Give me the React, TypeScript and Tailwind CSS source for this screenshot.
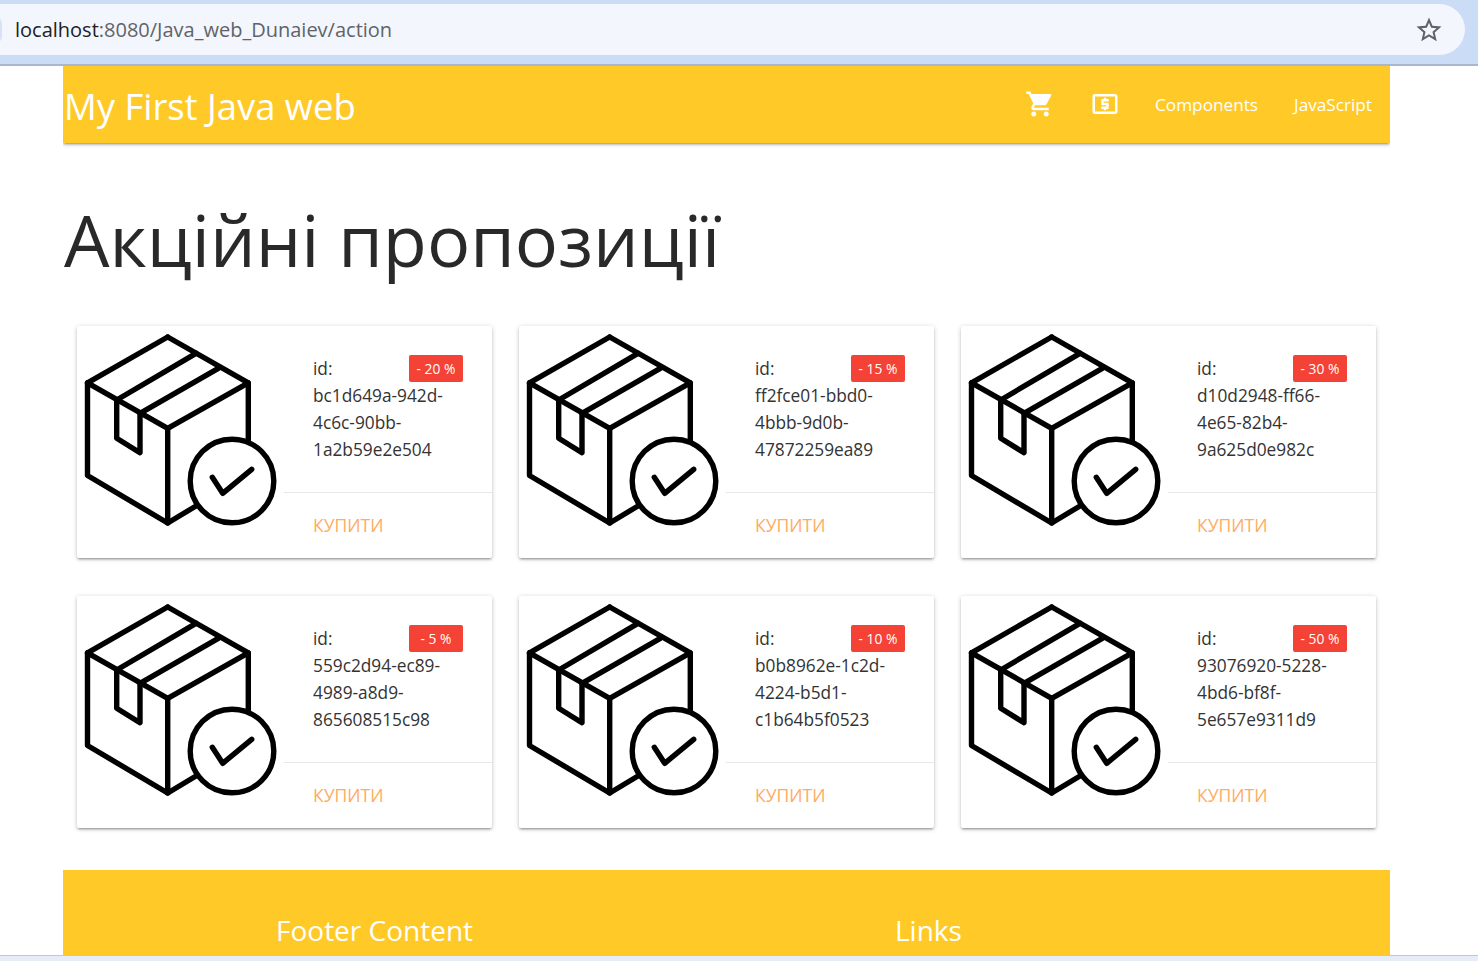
import { MdShoppingCart, MdLocalAtm, MdStarBorder } from 'react-icons/md';

const offers = [
  { discount: '- 20 %', lines: ['bc1d649a-942d-', '4c6c-90bb-', '1a2b59e2e504'] },
  { discount: '- 15 %', lines: ['ff2fce01-bbd0-', '4bbb-9d0b-', '47872259ea89'] },
  { discount: '- 30 %', lines: ['d10d2948-ff66-', '4e65-82b4-', '9a625d0e982c'] },
  { discount: '- 5 %', lines: ['559c2d94-ec89-', '4989-a8d9-', '865608515c98'] },
  { discount: '- 10 %', lines: ['b0b8962e-1c2d-', '4224-b5d1-', 'c1b64b5f0523'] },
  { discount: '- 50 %', lines: ['93076920-5228-', '4bd6-bf8f-', '5e657e9311d9'] },
];

const BoxIcon = () => (
  <svg width="207" height="232" viewBox="0 0 207 232" fill="none" stroke="#000" strokeWidth="5.4" strokeLinejoin="round" strokeLinecap="round" className="shrink-0">
    <path d="M90.7 11 L10.5 56.8 L10.5 149.5 L90.7 197 L119 180" />
    <path d="M90.7 11 L171.3 56.8 L171.3 114" />
    <path d="M10.5 56.8 L90.7 102.3 L171.3 56.8" />
    <path d="M90.7 102.3 L90.7 197" />
    <path d="M39.7 74 L119 27.3" />
    <path d="M63 87.3 L141.3 42.3" />
    <path d="M39.7 74 L39.7 112.3 L63 126.7 L63 87.3" />
    <circle cx="155" cy="155" r="41.8" />
    <path d="M135.3 151.3 L145.7 167.3 L174.7 143.3" />
  </svg>
);

const OfferCard = ({ discount, lines }: { discount: string; lines: string[] }) => (
  <div className="flex h-[232px] w-[415px] rounded-[2px] bg-white shadow-[0_2px_2px_0_rgba(0,0,0,0.14),0_3px_1px_-2px_rgba(0,0,0,0.12),0_1px_5px_0_rgba(0,0,0,0.2)]">
    <BoxIcon />
    <div className="flex flex-1 flex-col">
      <div className="relative h-[167px] border-b border-[#e8e8e8] pl-[29px] pt-[29px] text-[17.3px] leading-[27px] text-[#333]">
        <div>id:</div>
        {lines.map((line) => (
          <div key={line}>{line}</div>
        ))}
        <span className="absolute left-[125px] top-[29px] flex h-[27px] w-[54px] items-center justify-center rounded-[2px] bg-[#f44336] text-[13.8px] text-white">
          {discount}
        </span>
      </div>
      <div className="flex flex-1 items-center pl-[29px] text-[17.5px] text-[#ffab61]">КУПИТИ</div>
    </div>
  </div>
);

export default function App() {
  return (
    <div className="flex h-screen flex-col overflow-hidden bg-white font-['Open_Sans',sans-serif]">
      {/* browser chrome */}
      <div className="h-[66px] shrink-0 border-b-2 border-[#a9b6cc] bg-[#cbdcf6] pt-[4px]">
        <div className="relative -ml-8 flex h-[51px] w-[1497px] items-center justify-between rounded-r-full bg-[#f3f6fc] pl-[47px] pr-[21px]">
          <span className="absolute left-[18px] top-[12px] h-[28px] w-[16px] rounded-full bg-[#d5e2f7]" />
          <div className="text-[20px]">
            <span className="text-[#202124]">localhost</span>
            <span className="text-[#5f6368]">:8080/Java_web_Dunaiev/action</span>
          </div>
          <MdStarBorder className="text-[30px] text-[#5f6368]" />
        </div>
      </div>

      <div className="ml-[63px] flex w-[1327px] flex-1 flex-col overflow-hidden">
        <nav className="flex h-[77px] shrink-0 items-center justify-between bg-[#ffca28] pl-[1px] pr-[18px] text-white shadow-[0_2px_2px_0_rgba(0,0,0,0.14),0_3px_1px_-2px_rgba(0,0,0,0.12),0_1px_5px_0_rgba(0,0,0,0.2)]">
          <div className="pt-[4px] text-[36.4px]">My First Java web</div>
          <div className="flex items-center text-[17.2px]">
            <MdShoppingCart className="mb-[2px] text-[30px]" />
            <MdLocalAtm className="mb-[2px] ml-[35px] text-[30px]" />
            <span className="ml-[35px]">Components</span>
            <span className="ml-[36px]">JavaScript</span>
          </div>
        </nav>

        <h1 className="mt-[52px] pl-[1px] text-[72px] leading-[88px] text-[#292929]">Акційні пропозиції</h1>

        <div className="mt-[43px] grid grid-cols-3 gap-x-[27px] gap-y-[38px] px-[14px]">
          {offers.map((offer) => (
            <OfferCard key={offer.discount} {...offer} />
          ))}
        </div>

        <footer className="mt-[42px] flex flex-1 bg-[#ffca28] pl-[213px] pt-[38px] text-[28px] leading-[44px] text-white">
          <div className="w-[619px]">Footer Content</div>
          <div>Links</div>
        </footer>
      </div>

      <div className="h-[6px] shrink-0 border-t border-[#c4c7cc] bg-[#e6edf8]" />
    </div>
  );
}
